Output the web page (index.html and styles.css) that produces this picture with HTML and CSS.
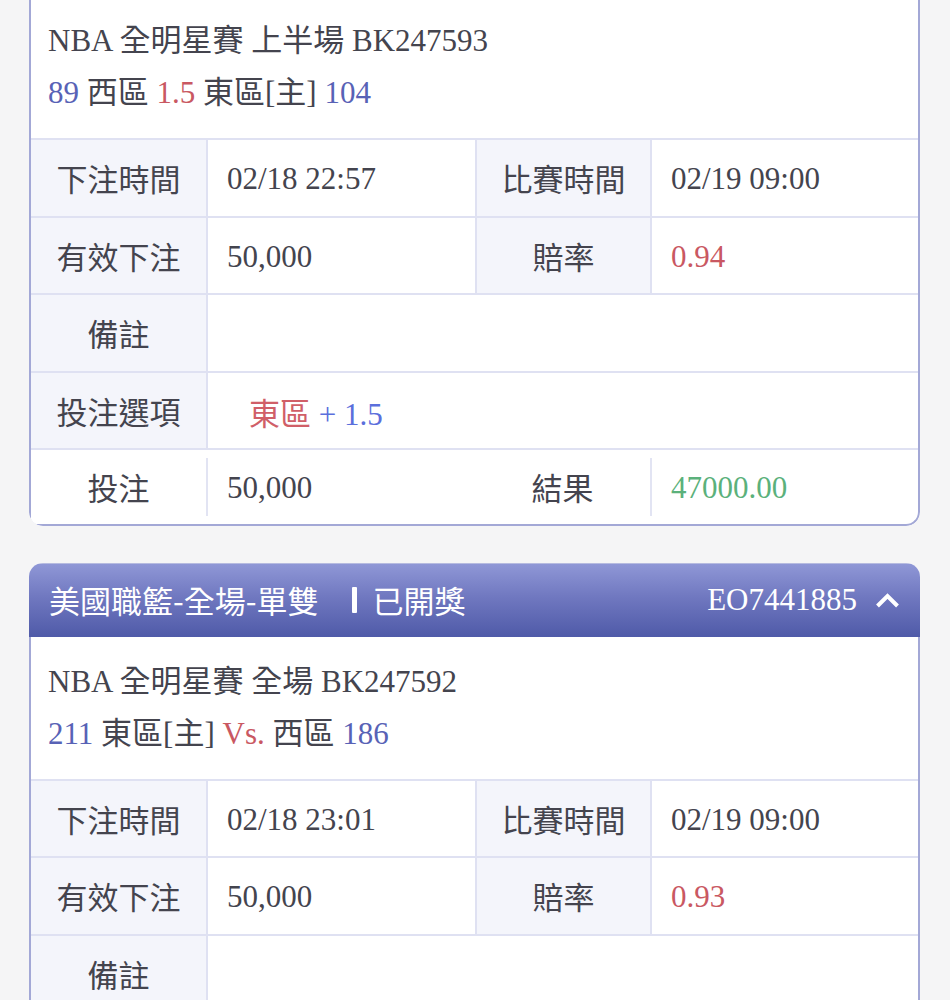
FILE: index.html
```html
<!DOCTYPE html>
<html lang="zh-Hant">
<head>
<meta charset="utf-8">
<title>注單</title>
<link rel="stylesheet" href="styles.css">
</head>
<body>
<div class="page">
  <section class="card">
    <header class="card-head">
      <span class="head-title">美國職籃-上半場-讓分</span>
      <span class="head-status">已開獎</span>
      <span class="head-id">EO7441880</span>
      <svg class="chev" width="25" height="15" viewBox="0 0 25 15"><polyline points="2.5,13 12.5,3 22.5,13" fill="none" stroke="#fff" stroke-width="4" stroke-linejoin="miter"/></svg>
    </header>
    <div class="card-body">
      <div class="info">
        <div class="line">NBA 全明星賽 上半場 BK247593</div>
        <div class="line"><span class="blue">89</span> 西區 <span class="red">1.5</span> 東區[主] <span class="blue">104</span></div>
      </div>
      <div class="row">
        <div class="lbl">下注時間</div>
        <div class="val">02/18 22:57</div>
        <div class="lbl">比賽時間</div>
        <div class="val">02/19 09:00</div>
      </div>
      <div class="row">
        <div class="lbl">有效下注</div>
        <div class="val">50,000</div>
        <div class="lbl">賠率</div>
        <div class="val"><span class="red">0.94</span></div>
      </div>
      <div class="row">
        <div class="lbl">備註</div>
        <div class="val wide"></div>
      </div>
      <div class="row">
        <div class="lbl">投注選項</div>
        <div class="val wide"><span class="pick"><span class="pick-red">東區</span> <span class="pick-blue">+ 1.5</span></span></div>
      </div>
      <div class="row last">
        <div class="lbl">投注</div>
        <div class="val">50,000</div>
        <div class="lbl">結果</div>
        <div class="val"><span class="green">47000.00</span></div>
      </div>
    </div>
  </section>

  <section class="card">
    <header class="card-head">
      <span class="head-title">美國職籃-全場-單雙</span>
      <span class="head-status">已開獎</span>
      <span class="head-id">EO7441885</span>
      <svg class="chev" width="25" height="15" viewBox="0 0 25 15"><polyline points="2.5,13 12.5,3 22.5,13" fill="none" stroke="#fff" stroke-width="4" stroke-linejoin="miter"/></svg>
    </header>
    <div class="card-body">
      <div class="info">
        <div class="line">NBA 全明星賽 全場 BK247592</div>
        <div class="line"><span class="blue">211</span> 東區[主] <span class="red">Vs.</span> 西區 <span class="blue">186</span></div>
      </div>
      <div class="row">
        <div class="lbl">下注時間</div>
        <div class="val">02/18 23:01</div>
        <div class="lbl">比賽時間</div>
        <div class="val">02/19 09:00</div>
      </div>
      <div class="row">
        <div class="lbl">有效下注</div>
        <div class="val">50,000</div>
        <div class="lbl">賠率</div>
        <div class="val"><span class="red">0.93</span></div>
      </div>
      <div class="row">
        <div class="lbl">備註</div>
        <div class="val wide"></div>
      </div>
      <div class="row">
        <div class="lbl">投注選項</div>
        <div class="val wide"><span class="pick"><span class="pick-red">單</span></span></div>
      </div>
      <div class="row last">
        <div class="lbl">投注</div>
        <div class="val">50,000</div>
        <div class="lbl">結果</div>
        <div class="val"><span class="green">46500.00</span></div>
      </div>
    </div>
  </section>
</div>
</body>
</html>
```

FILE: styles.css
```css
html, body {
  margin: 0;
  padding: 0;
  background: #f5f5f6;
}

body {
  font-family: "Liberation Serif", "Noto Sans CJK TC", serif;
  font-size: 31px;
  color: #44444e;
}

.page {
  padding: 0 30px 40px 29px;
  margin-top: -78px;
  display: flex;
  flex-direction: column;
  gap: 37px;
}

.card {
  width: 891px;
  border-radius: 14px;
  overflow: hidden;
  background: #fff;
}

.card-head {
  height: 74px;
  box-sizing: border-box;
  display: flex;
  align-items: center;
  padding: 0 20px;
  background: linear-gradient(to bottom, #8f97d6 0%, #7078c0 45%, #4f5aa8 100%);
  color: #fff;
  border-top: 1px solid #b6bbe0;
}

.head-title {
  font-family: "Noto Sans CJK TC", sans-serif;
  font-size: 31px;
  line-height: 40px;
}

.head-status {
  font-family: "Noto Sans CJK TC", sans-serif;
  font-size: 31px;
  line-height: 40px;
  display: flex;
  align-items: center;
  margin-left: 33px;
}

.head-status::before {
  content: "";
  width: 5px;
  height: 26px;
  background: #fff;
  margin-right: 16px;
  border-radius: 1px;
}

.head-id {
  margin-left: auto;
  font-size: 31px;
  line-height: 40px;
}

.chev {
  margin-left: 18px;
  display: block;
}

.card-body {
  border: 2px solid #a3a8d6;
  border-top: none;
  border-radius: 0 0 14px 14px;
}

.info {
  padding: 19px 17px 19px;
}

.line {
  line-height: 52px;
  white-space: nowrap;
}

.blue { color: #5862b6; }
.red { color: #c95862; }
.green { color: #5bb17b; }

.pick { padding-left: 22px; }
.pick-red { color: #d05f68; }
.pick-blue { color: #5b6fdc; }

.row {
  display: grid;
  grid-template-columns: 175px 269px 175px 1fr;
  height: 77.5px;
  box-sizing: border-box;
  border-top: 2px solid #dfe1f2;
}

.lbl {
  background: #f4f5fb;
  display: flex;
  align-items: center;
  justify-content: center;
  font-family: "Noto Sans CJK TC", sans-serif;
  font-size: 31px;
}

.val {
  display: flex;
  align-items: center;
  padding-left: 19px;
  padding-top: 3px;
  border-left: 2px solid #dfe1f2;
}

.row .lbl + .val + .lbl {
  border-left: 2px solid #dfe1f2;
}

.val.wide {
  grid-column: 2 / 5;
}

.row.last {
  height: 75.5px;
  align-items: center;
}

.row.last .lbl {
  background: #fff;
  height: 100%;
}

.row.last .lbl + .val + .lbl {
  border-left: none;
}

.row.last .val {
  height: 58px;
  box-sizing: border-box;
  border-left-color: #e2e4f3;
}
```
